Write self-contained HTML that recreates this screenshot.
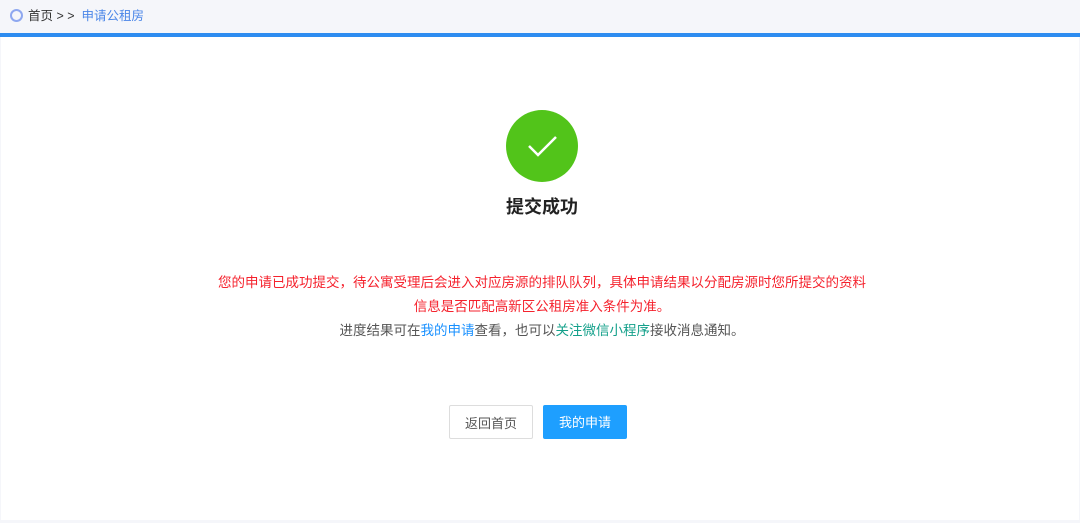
<!DOCTYPE html>
<html><head><meta charset="utf-8"><style>
body{margin:0;width:1080px;height:523px;background:#f5f6fa;font-family:"Liberation Sans","Noto Sans CJK SC",sans-serif;position:relative;overflow:hidden}
.top{position:absolute;left:0;top:0;width:1080px;height:33px;background:#f5f6fa;font-size:12.5px;color:#333}
.top .c{position:absolute;left:10px;top:9px;width:9px;height:9px;border:2px solid #8fa8f0;border-radius:50%}
.top .t{position:absolute;left:28px;top:7px;line-height:18px}
.top .t span{color:#4a86e8}
.bar{position:absolute;left:0;top:33px;width:1080px;height:4px;background:#2d8cf0}
.main{position:absolute;left:1px;top:37px;width:1078px;height:483px;background:#fff}
.chk{position:absolute;left:506px;top:110px;width:72px;height:72px;border-radius:50%;background:#52c41a}
.title{position:absolute;left:2px;width:1080px;top:193px;text-align:center;font-size:18px;font-weight:bold;color:#222}
.msg{position:absolute;left:2px;width:1080px;top:271px;text-align:center;font-size:13.5px;line-height:24px;color:#555}
.red{color:#f5222d}
.b{position:absolute;top:405px;height:34px;line-height:36px;text-align:center;font-size:13px;box-sizing:border-box;border-radius:2px}
</style></head><body>
<div class="top"><div class="c"></div><div class="t">首页 &gt; &gt; &nbsp;<span>申请公租房</span></div></div>
<div class="bar"></div>
<div class="main"></div>
<div class="chk"><svg width="72" height="72"><path d="M23 36 L32 45 L50 27" stroke="#fff" stroke-width="2.5" fill="none"/></svg></div>
<div class="title">提交成功</div>
<div class="msg"><span class="red">您的申请已成功提交，待公寓受理后会进入对应房源的排队队列，具体申请结果以分配房源时您所提交的资料<br>信息是否匹配高新区公租房准入条件为准。</span><br>进度结果可在<span style="color:#1890ff">我的申请</span>查看，也可以<span style="color:#13a08a">关注微信小程序</span>接收消息通知。</div>
<div class="b" style="left:449px;width:84px;border:1px solid #ddd;color:#555;background:#fff">返回首页</div>
<div class="b" style="left:543px;width:84px;background:#1e9fff;color:#fff">我的申请</div>
</body></html>
